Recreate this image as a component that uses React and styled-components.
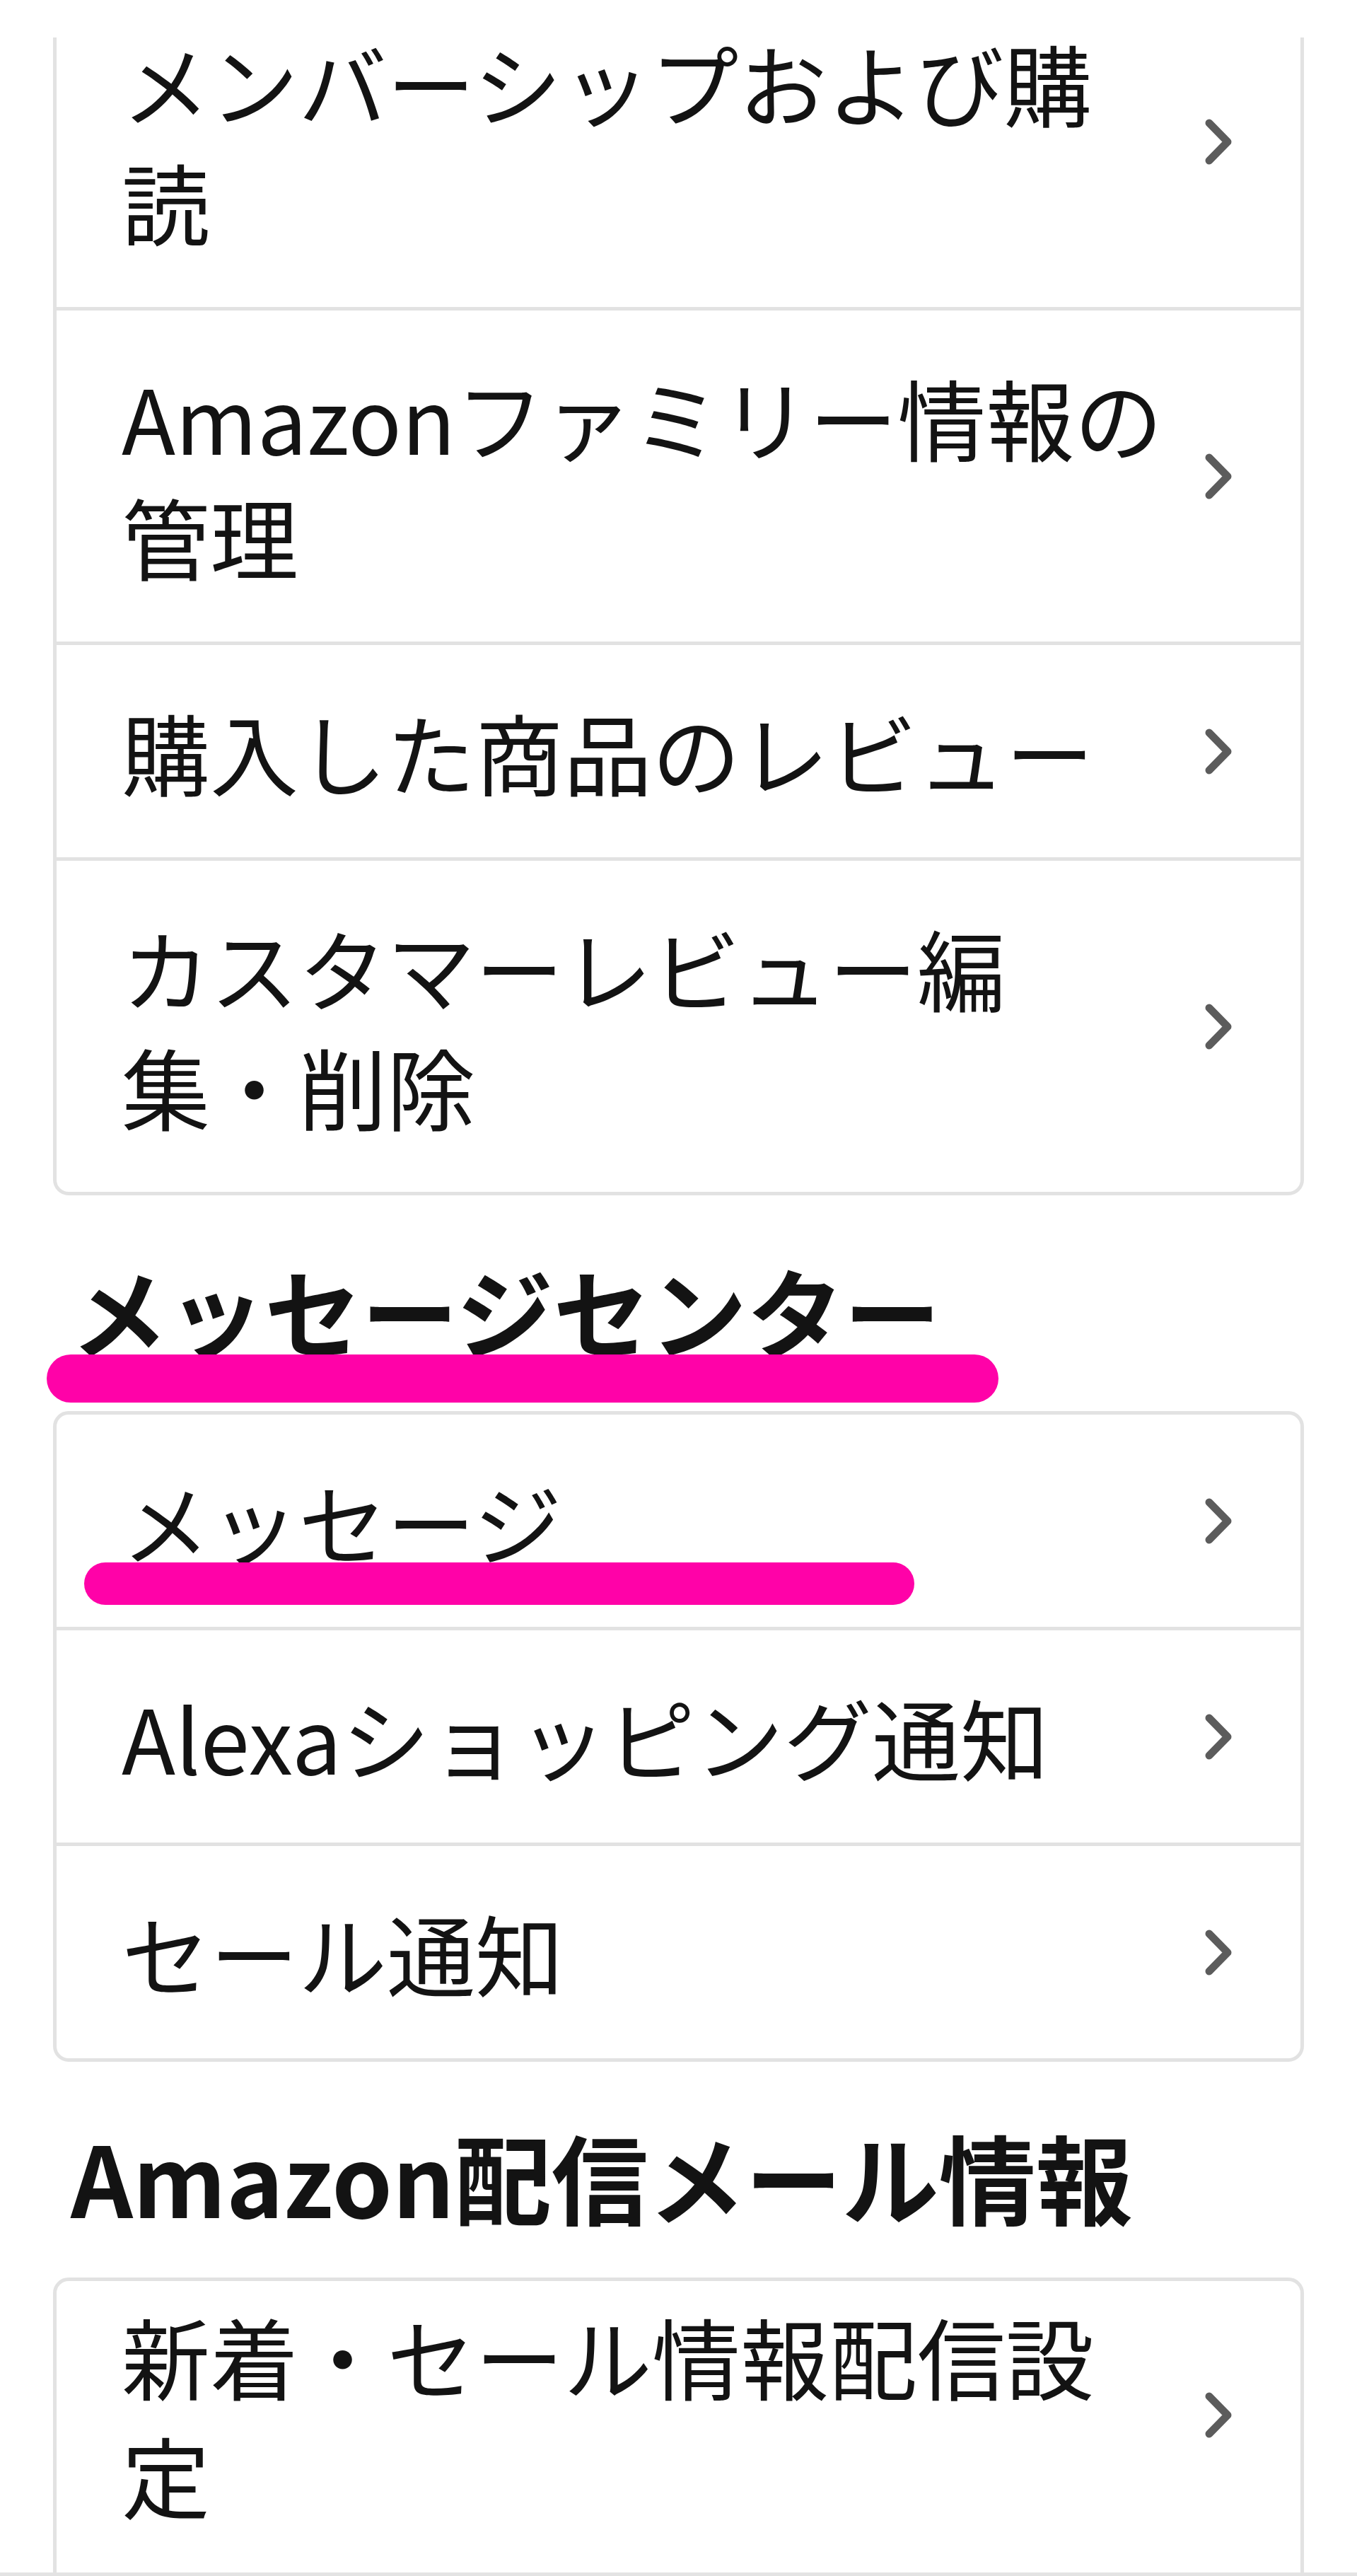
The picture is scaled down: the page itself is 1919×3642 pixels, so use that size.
import React from "react";
import styled, { createGlobalStyle } from "styled-components";

const GlobalStyle = createGlobalStyle`
  html, body { margin: 0; padding: 0; background: #ffffff; }
  body {
    font-family: "Noto Sans CJK JP", "Noto Sans", sans-serif;
    color: #131313;
    -webkit-font-smoothing: antialiased;
  }
`;

const Screen = styled.div`
  width: 1919px;
  height: 3642px;
  display: flex;
  flex-direction: column;
  overflow: hidden;
  background: #ffffff;
`;

const TopBar = styled.div`
  flex: none;
  height: 53px;
  background: #ffffff;
`;

const Viewport = styled.div`
  flex: 1;
  min-height: 0;
  overflow: hidden;
`;

/* the list is scrolled: its top lies 92px above the visible area */
const Content = styled.div`
  display: flex;
  flex-direction: column;
  padding: 0 75px;
  margin-top: -92px;
`;

const BottomEdge = styled.div`
  flex: none;
  height: 5px;
  background: #e3e3e3;
`;

const SectionHeader = styled.div`
  position: relative;
  margin: 79px 0 62px;
  padding-left: 25px;
`;

const SectionTitle = styled.h2`
  margin: 0;
  font-size: 137px;
  line-height: 164px;
  font-weight: 700;
  color: #131313;
  white-space: nowrap;
  position: relative;
  z-index: 1;
`;

const Highlight = styled.span`
  position: absolute;
  z-index: 2;
  left: ${(p) => p.$left}px;
  top: ${(p) => p.$top}px;
  width: ${(p) => p.$width}px;
  height: ${(p) => p.$height}px;
  border-radius: ${(p) => p.$height / 2}px;
  background: #ff02a8;
`;

const Card = styled.div`
  border: 5px solid #e2e2e2;
  border-radius: 22px;
  background: #ffffff;
  overflow: hidden;
`;

const Row = styled.div`
  position: relative;
  display: flex;
  align-items: center;
  gap: 40px;
  padding: ${(p) => p.$padTop}px 96px ${(p) => p.$padBottom}px 92px;

  & + & {
    border-top: 5px solid #e2e2e2;
  }
`;

const Label = styled.span`
  flex: 1;
  min-width: 0;
  font-size: 125px;
  line-height: 168px;
  font-weight: 400;
  color: #131313;
`;

const ChevronIcon = styled.svg`
  flex: none;
  width: 41px;
  height: 67px;
`;

const Chevron = () => (
  <ChevronIcon viewBox="0 0 41 67" aria-hidden="true">
    <polyline
      points="8,7 34,33.5 8,60"
      fill="none"
      stroke="#5c5c5c"
      strokeWidth="11"
      strokeLinecap="round"
      strokeLinejoin="round"
    />
  </ChevronIcon>
);

const sections = [
  {
    title: null,
    items: [
      { label: "メンバーシップおよび購読" },
      { label: "Amazonファミリー情報の管理" },
      { label: "購入した商品のレビュー" },
      { label: "カスタマーレビュー編集・削除" },
    ],
  },
  {
    title: "メッセージセンター",
    titleMark: { left: -9, top: 146, width: 1346, height: 68 },
    items: [
      {
        label: "メッセージ",
        mark: { left: 39, top: 209, width: 1174, height: 60 },
      },
      { label: "Alexaショッピング通知" },
      { label: "セール通知" },
    ],
  },
  {
    title: "Amazon配信メール情報",
    items: [{ label: "新着・セール情報配信設定", padTop: 21, padBottom: 113 }],
  },
];

const MenuRow = ({ item }) => (
  <Row $padTop={item.padTop ?? 66} $padBottom={item.padBottom ?? 66}>
    <Label>{item.label}</Label>
    <Chevron />
    {item.mark && (
      <Highlight
        $left={item.mark.left}
        $top={item.mark.top}
        $width={item.mark.width}
        $height={item.mark.height}
      />
    )}
  </Row>
);

export default function App() {
  return (
    <>
      <GlobalStyle />
      <Screen>
        <TopBar />
        <Viewport>
          <Content>
            {sections.map((section, i) => (
              <React.Fragment key={i}>
                {section.title && (
                  <SectionHeader>
                    <SectionTitle>{section.title}</SectionTitle>
                    {section.titleMark && (
                      <Highlight
                        $left={section.titleMark.left}
                        $top={section.titleMark.top}
                        $width={section.titleMark.width}
                        $height={section.titleMark.height}
                      />
                    )}
                  </SectionHeader>
                )}
                <Card>
                  {section.items.map((item) => (
                    <MenuRow key={item.label} item={item} />
                  ))}
                </Card>
              </React.Fragment>
            ))}
          </Content>
        </Viewport>
        <BottomEdge />
      </Screen>
    </>
  );
}
